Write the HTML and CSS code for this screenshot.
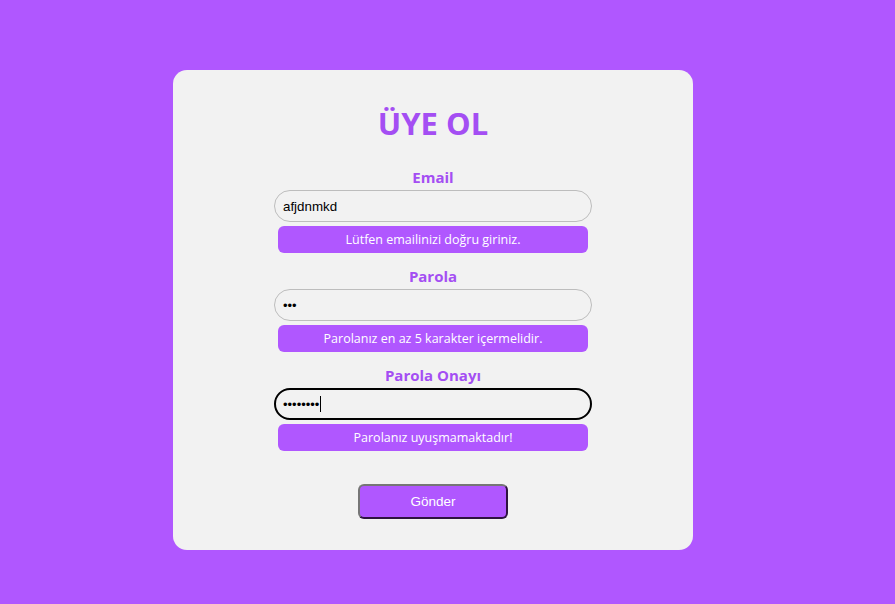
FILE: index.html
```html
<!DOCTYPE html>
<html lang="tr">
<head>
<meta charset="utf-8">
<title>Üye Ol</title>
<link rel="stylesheet" href="styles.css">
</head>
<body>
<div class="card">
  <h1 class="title">ÜYE OL</h1>
  <form class="form">
    <div class="field">
      <label class="label">Email</label>
      <div class="input">afjdnmkd</div>
      <div class="error">Lütfen emailinizi doğru giriniz.</div>
    </div>
    <div class="field">
      <label class="label">Parola</label>
      <div class="input dots">•••</div>
      <div class="error">Parolanız en az 5 karakter içermelidir.</div>
    </div>
    <div class="field">
      <label class="label">Parola Onayı</label>
      <div class="input focused dots">••••••••<span class="caret"></span></div>
      <div class="error">Parolanız uyuşmamaktadır!</div>
    </div>
    <div class="actions">
      <button type="button" class="submit">Gönder</button>
    </div>
  </form>
</div>
</body>
</html>
```
FILE: styles.css
```css
html, body {
  margin: 0;
  padding: 0;
  background: #b057ff;
  height: 100%;
}
body {
  padding-top: 70px;
  box-sizing: border-box;
}
.card {
  margin-left: 173px;
  width: 520px;
  height: 480px;
  box-sizing: border-box;
  background: #f2f2f2;
  border-radius: 14px;
  padding-top: 97px;
  font-family: "Open Sans", "Noto Sans", sans-serif;
  display: flex;
  flex-direction: column;
  align-items: center;
  position: relative;
}
.title {
  position: absolute;
  top: 32px;
  left: 0;
  right: 0;
  margin: 0;
  text-align: center;
  font-size: 31px;
  line-height: 42px;
  font-weight: 700;
  color: #a44ef3;
}
.form {
  display: flex;
  flex-direction: column;
  align-items: center;
  gap: 13px;
}
.field {
  display: flex;
  flex-direction: column;
  align-items: center;
}
.label {
  font-size: 15px;
  font-weight: 700;
  line-height: 20px;
  height: 20px;
  color: #a44ef3;
  margin-bottom: 3px;
}
.input {
  width: 318px;
  height: 32px;
  box-sizing: border-box;
  border: 1px solid #bdbdbd;
  border-radius: 16px;
  padding: 0 8px;
  display: flex;
  align-items: center;
  font-family: "Liberation Sans", Arial, sans-serif;
  font-size: 13.33px;
  color: #000;
  background: #f2f2f2;
}
.input.dots {
  font-size: 13px;
  padding-left: 8px;
}
.input.focused {
  border: 2px solid #000;
  padding-left: 7px;
}
.caret {
  display: inline-block;
  width: 1px;
  height: 16px;
  background: #000;
  margin-left: 1px;
}
.error {
  margin-top: 4px;
  width: 310px;
  height: 27px;
  box-sizing: border-box;
  background: #b057ff;
  color: #fff;
  border-radius: 6px;
  font-size: 12.5px;
  line-height: 27px;
  text-align: center;
}
.actions {
  margin-top: 20px;
}
.submit {
  width: 150px;
  height: 35px;
  box-sizing: border-box;
  background: #b057ff;
  color: #fff;
  border: 2px solid;
  border-color: #767676 #2e1340 #2e1340 #767676;
  border-radius: 6px;
  font-family: "Liberation Sans", Arial, sans-serif;
  font-size: 13.5px;
  padding: 0;
  cursor: pointer;
}
```
